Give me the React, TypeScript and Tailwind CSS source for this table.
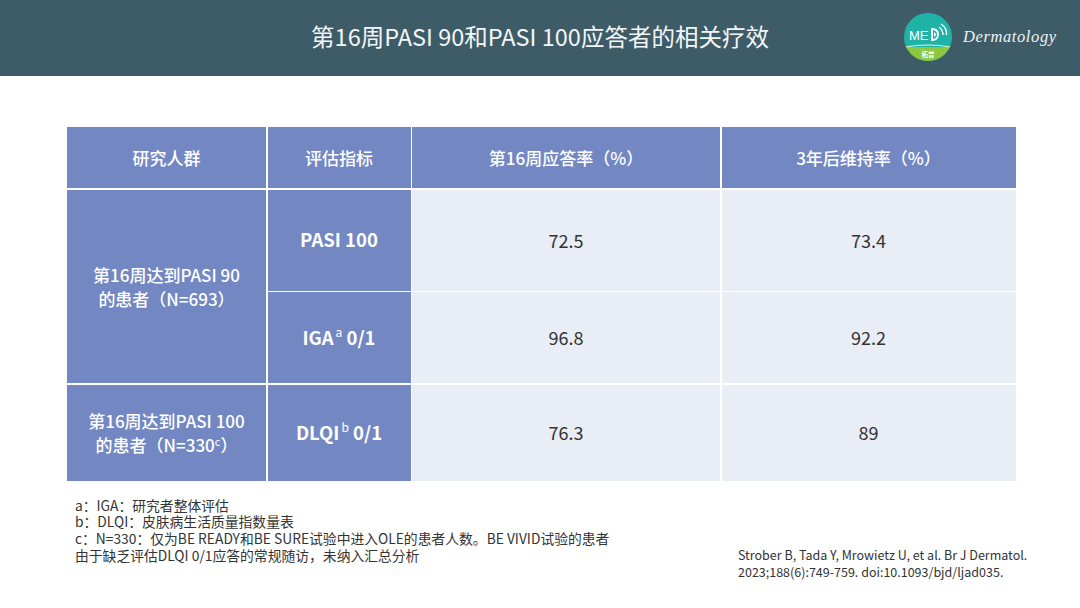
const cjk = '"Noto Sans CJK SC", "Noto Sans", sans-serif';

function Logo() {
  return (
    <div className="flex items-center gap-[10px]">
      <svg width="50" height="50" viewBox="0 0 50 50">
        <defs>
          <clipPath id="c">
            <circle cx="25" cy="25" r="24" />
          </clipPath>
        </defs>
        <circle cx="25" cy="25" r="24" fill="#1fb3a8" />
        <g clipPath="url(#c)">
          <rect x="0" y="35" width="50" height="20" fill="#8dc641" />
          <path d="M0 35 Q25 30 50 35 L50 36 Q25 31 0 36 Z" fill="#e6f3c8" />
        </g>
        <text x="6" y="28" fontSize="13" fontWeight="500" fill="#fff" fontFamily="Liberation Sans, sans-serif">ME</text>
        <path d="M29 17 L29 28 Q35 28 35 22.5 Q35 17 29 17 Z" fill="none" stroke="#fff" strokeWidth="1.8" />
        <path d="M31 20 L33.5 22.5 L31 25 Z" fill="#fff" />
        <path d="M36 15 Q40 18 40 23" fill="none" stroke="#fff" strokeWidth="1.4" />
        <path d="M38 12 Q44 16 43.5 23" fill="none" stroke="#fff" strokeWidth="1.4" />
        <text x="25" y="45" fontSize="6.5" textAnchor="middle" fill="#fff" fontWeight="700" fontFamily={cjk}>拓普</text>
      </svg>
      <span
        className="text-[16.5px] italic text-[#eef2f3] tracking-[0.6px]"
        style={{ fontFamily: '"Liberation Serif", "DejaVu Serif", serif' }}
      >
        Dermatology
      </span>
    </div>
  );
}

export default function App() {
  const head = "bg-[#7388c3] text-white flex items-center justify-center text-center";
  const cell = "bg-[#e9edf6] text-[#333] flex items-center justify-center text-[18px]";
  return (
    <div className="w-[1080px] h-[608px] bg-white overflow-hidden" style={{ fontFamily: cjk }}>
      <header className="h-[76px] bg-[#3e5c67] relative flex items-center justify-center">
        <h1 className="text-[23.5px] text-[#f3f6f7] font-normal -mt-[2px]">
          第16周PASI 90和PASI 100应答者的相关疗效
        </h1>
        <div className="absolute left-[903px] top-[12px]">
          <Logo />
        </div>
      </header>

      <div className="ml-[67px] mt-[51px] w-[948px] grid grid-cols-[199px_143px_308px_294px] grid-rows-[61px_101px_91px_96px] gap-[1.5px] bg-white">
        <div className={`${head} text-[17px] font-medium`}>研究人群</div>
        <div className={`${head} text-[17px] font-medium`}>评估指标</div>
        <div className={`${head} text-[17px] font-medium`}>第16周应答率（%）</div>
        <div className={`${head} text-[17px] font-medium`}>3年后维持率（%）</div>

        <div className={`${head} row-span-2 text-[17px] font-medium leading-[24px] pt-[2px]`}>
          第16周达到PASI 90
          <br />
          的患者（N=693）
        </div>
        <div className={`${head} text-[18.5px] font-bold`}>PASI 100</div>
        <div className={cell}>72.5</div>
        <div className={cell}>73.4</div>

        <div className={`${head} text-[18.5px] font-bold`}>
          IGA<sup className="text-[12px] font-normal ml-[2px] -top-[6px]">a</sup>&nbsp;0/1
        </div>
        <div className={cell}>96.8</div>
        <div className={cell}>92.2</div>

        <div className={`${head} text-[17px] font-medium leading-[24px]`}>
          <div>
            第16周达到PASI 100
            <br />
            的患者（N=330<sup className="text-[11px] font-normal -top-[6px]">c</sup>）
          </div>
        </div>
        <div className={`${head} text-[18.5px] font-bold`}>
          DLQI<sup className="text-[12px] font-normal ml-[2px] -top-[6px]">b</sup>&nbsp;0/1
        </div>
        <div className={cell}>76.3</div>
        <div className={cell}>89</div>
      </div>

      <div className="flex items-end mt-[16px]">
        <div className="ml-[75px] w-[650px] text-[13.8px] leading-[16.7px] text-[#333] whitespace-nowrap">
          <p>a：IGA：研究者整体评估</p>
          <p>b：DLQI：皮肤病生活质量指数量表</p>
          <p>c：N=330：仅为BE READY和BE SURE试验中进入OLE的患者人数。BE VIVID试验的患者</p>
          <p>由于缺乏评估DLQI 0/1应答的常规随访，未纳入汇总分析</p>
        </div>
        <div className="ml-[13px] text-[12.5px] leading-[17px] text-[#333] mb-[-17px] whitespace-nowrap">
          <p>Strober B, Tada Y, Mrowietz U, et al. Br J Dermatol.</p>
          <p>2023;188(6):749-759. doi:10.1093/bjd/ljad035.</p>
        </div>
      </div>
    </div>
  );
}
